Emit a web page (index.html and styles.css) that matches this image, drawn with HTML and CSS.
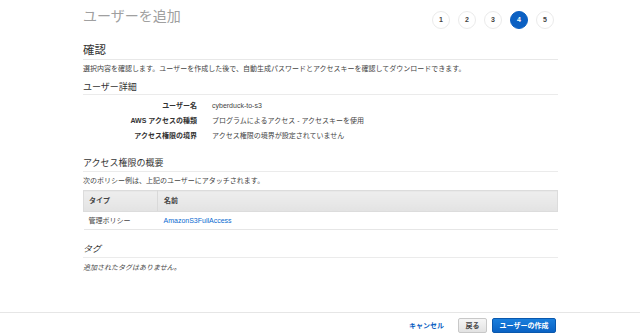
FILE: index.html
```html
<!DOCTYPE html>
<html lang="ja">
<head>
<meta charset="utf-8">
<link rel="stylesheet" href="styles.css">
</head>
<body>
<div class="page">
  <div class="main">
    <div class="header">
      <h1 class="title">ユーザーを追加</h1>
      <ol class="steps">
        <li class="step">1</li>
        <li class="step">2</li>
        <li class="step">3</li>
        <li class="step active">4</li>
        <li class="step">5</li>
      </ol>
    </div>

    <h2 class="h2">確認</h2>
    <p class="desc">選択内容を確認します。ユーザーを作成した後で、自動生成パスワードとアクセスキーを確認してダウンロードできます。</p>

    <h3 class="h3 sec-details">ユーザー詳細</h3>
    <div class="details">
      <div class="lbl">ユーザー名</div><div class="val">cyberduck-to-s3</div>
      <div class="lbl">AWS アクセスの種類</div><div class="val">プログラムによるアクセス - アクセスキーを使用</div>
      <div class="lbl">アクセス権限の境界</div><div class="val">アクセス権限の境界が設定されていません</div>
    </div>

    <h3 class="h3 sec-perm">アクセス権限の概要</h3>
    <p class="desc desc-perm">次のポリシー例は、上記のユーザーにアタッチされます。</p>
    <table class="tbl">
      <thead>
        <tr><th class="c1">タイプ</th><th class="c2">名前</th></tr>
      </thead>
      <tbody>
        <tr><td class="c1">管理ポリシー</td><td class="c2"><a class="link" href="#">AmazonS3FullAccess</a></td></tr>
      </tbody>
    </table>

    <h3 class="h3 sec-tags italic">タグ</h3>
    <p class="desc desc-tags italic">追加されたタグはありません。</p>
  </div>

  <div class="footer">
    <div class="footer-inner">
      <a class="cancel" href="#">キャンセル</a>
      <button class="btn btn-back">戻る</button>
      <button class="btn btn-primary">ユーザーの作成</button>
    </div>
  </div>
</div>
</body>
</html>
```

FILE: styles.css
```css
* { box-sizing: border-box; }
html, body { margin: 0; padding: 0; background: #fff; }
body {
  font-family: "Liberation Sans", "Noto Sans CJK JP", sans-serif;
  color: #444;
  font-size: 7px;
  line-height: 10px;
  width: 640px;
  height: 336px;
  overflow: hidden;
}
.page { width: 640px; }
.main { margin-left: 83px; width: 475px; }

.header { display: flex; justify-content: space-between; align-items: flex-start; height: 30px; }
.title {
  margin: 7px 0 0 0;
  font-size: 14px;
  line-height: 18px;
  font-weight: normal;
  color: #a0a0a0;
}
.steps {
  list-style: none;
  margin: 11px 4px 0 0;
  padding: 0;
  display: flex;
  gap: 8px;
}
.step {
  width: 18px;
  height: 18px;
  border-radius: 50%;
  border: 1px solid #ebebeb;
  background: #fff;
  color: #444;
  font-size: 7px;
  font-weight: bold;
  display: flex;
  align-items: center;
  justify-content: center;
}
.step.active { background: #0b60c2; border-color: #0b60c2; color: #fff; }

.h2 {
  margin: 13px 0 0 0;
  font-size: 11.5px;
  line-height: 14px;
  font-weight: normal;
  color: #333;
  padding-bottom: 2px;
  border-bottom: 1px solid #e8e8e8;
}
.desc { margin: 4px 0 0 0; color: #444; }

.h3 {
  font-size: 9px;
  line-height: 12px;
  font-weight: normal;
  color: #333;
  margin: 0;
  padding-bottom: 1px;
  border-bottom: 1px solid #ebebeb;
}
.sec-details { margin-top: 7px; }

.details {
  display: grid;
  grid-template-columns: 114px 1fr;
  column-gap: 15px;
  padding-top: 3px;
}
.lbl { text-align: right; font-weight: bold; color: #333; line-height: 15px; }
.val { color: #444; line-height: 15px; }

.sec-perm { margin-top: 14px; padding-bottom: 2px; }
.desc-perm { margin-top: 4px; }

.tbl {
  margin-top: 4px;
  width: 100%;
  border-collapse: collapse;
}
.tbl th {
  height: 21px;
  background: linear-gradient(#eeeeee, #e3e3e3);
  border-top: 1px solid #dcdcdc;
  border-bottom: 1px solid #dcdcdc;
  text-align: left;
  font-weight: bold;
  color: #444;
  padding: 0 0 0 5px;
}
.tbl th.c1 { border-left: 1px solid #dcdcdc; border-right: 1px solid #d9d9d9; width: 74px; }
.tbl th.c2 { border-right: 1px solid #dcdcdc; padding-left: 6px; }
.tbl td {
  height: 18px;
  padding: 0 0 0 5px;
  border-bottom: 1px solid #e6e6e6;
  color: #444;
}
.tbl td.c2 { padding-left: 6px; }
.link { color: #0a6ad0; text-decoration: none; }

.sec-tags { margin-top: 13px; padding-bottom: 2px; }
.italic { font-style: italic; }
.desc-tags { margin-top: 5px; }

.footer {
  position: absolute;
  left: 0;
  top: 312px;
  width: 640px;
  border-top: 1px solid #e6e6e6;
}
.footer-inner {
  display: flex;
  justify-content: flex-end;
  align-items: center;
  padding: 5px 84px 0 0;
}
.cancel {
  color: #0b60c2;
  font-weight: bold;
  text-decoration: none;
  margin-right: 14px;
}
.btn {
  font-family: inherit;
  font-size: 7px;
  font-weight: bold;
  height: 15px;
  line-height: 13px;
  padding: 0;
  border-radius: 2px;
}
.btn-back {
  width: 29px;
  color: #444;
  background: linear-gradient(#f6f6f6, #e2e2e2);
  border: 1px solid #c8c8c8;
  margin-right: 5px;
}
.btn-primary {
  width: 64px;
  color: #fff;
  background: linear-gradient(#1a7fdd, #0a62c4);
  border: 1px solid #0a58ad;
}
```
